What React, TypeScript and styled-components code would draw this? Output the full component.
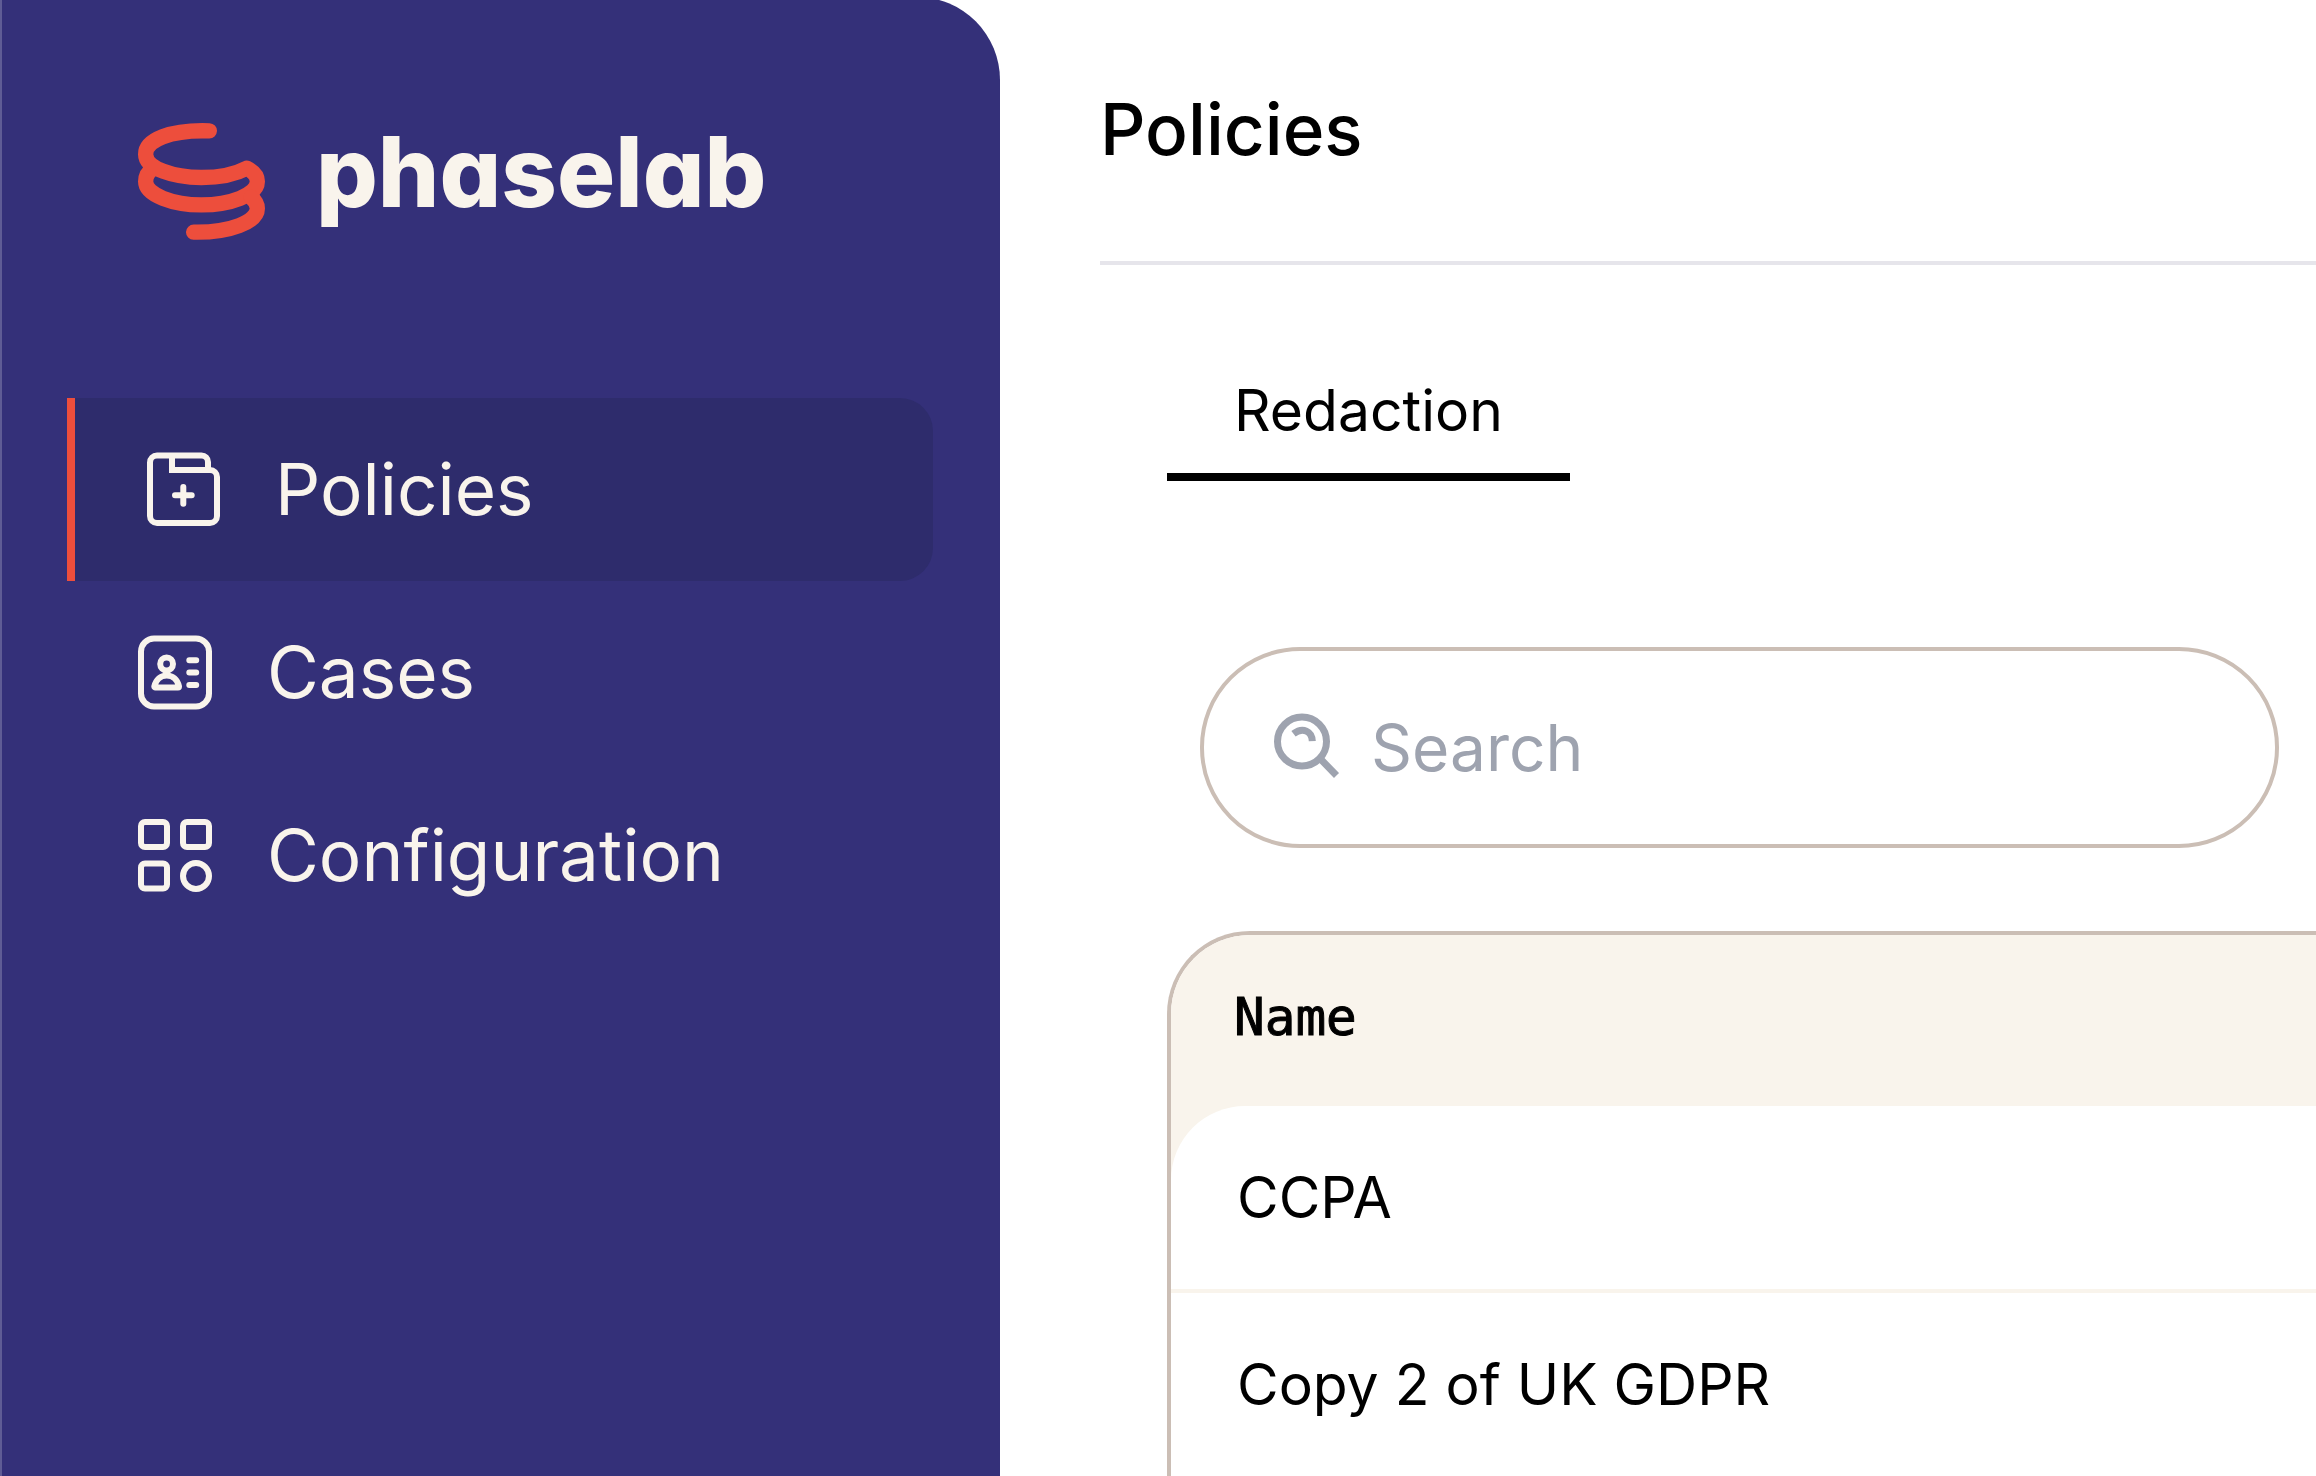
import React from "react";
import styled, { createGlobalStyle } from "styled-components";

const color = {
  indigo: "#343079",
  indigoDark: "#2e2c6c",
  edge: "#5f5c95",
  cream: "#f9f4ec",
  red: "#ed4e3c",
  sand: "#cbbeb5",
  grey: "#9ea3af",
  line: "#e6e5eb",
};

const GlobalStyle = createGlobalStyle`
  *, *::before, *::after { box-sizing: border-box; }
  body {
    margin: 0;
    background: #fff;
    color: #000;
    font-family: Inter, "Liberation Sans", sans-serif;
  }
`;

const Page = styled.div`
  display: flex;
  height: 100vh;
  overflow: hidden;
`;

const Sidebar = styled.aside`
  flex: 0 0 1000px;
  margin-top: -3px;
  padding: 126px 67px 0 65px;
  border-left: 2px solid ${color.edge};
  border-top-right-radius: 83px;
  background: ${color.indigo};
  color: ${color.cream};
`;

const Brand = styled.a`
  display: flex;
  align-items: flex-start;
  gap: 51px;
  padding-left: 71px;
  color: inherit;
  text-decoration: none;
`;

const Wordmark = styled.span`
  font-size: 97px;
  line-height: 98px;
  font-weight: 800;
  font-feature-settings: "cv11";
`;

const NavList = styled.nav`
  display: flex;
  flex-direction: column;
  margin-top: 158px;
`;

const NavLink = styled.a<{ $active?: boolean }>`
  display: flex;
  align-items: center;
  gap: 42px;
  height: 183px;
  padding: 0 0 2px 58px;
  border-left: ${(p) => (p.$active ? `8px solid ${color.red}` : "0")};
  border-radius: 0 33px 33px 0;
  background: ${(p) => (p.$active ? color.indigoDark : "transparent")};
  color: inherit;
  font-size: 71px;
  line-height: 100px;
  text-decoration: none;
`;

const Main = styled.main`
  flex: 1;
  min-width: 0;
  padding-left: 100px;
`;

const Header = styled.header`
  padding: 89px 0 92px;
  border-bottom: 4px solid ${color.line};
`;

const Title = styled.h1`
  margin: 0;
  font-size: 71px;
  line-height: 80px;
  font-weight: 500;
`;

const Content = styled.section`
  padding: 111px 0 0 67px;
`;

const Tab = styled.button`
  display: block;
  padding: 0 67px 27px;
  border: 0;
  border-bottom: 8px solid #000;
  background: none;
  color: inherit;
  font: inherit;
  font-size: 57px;
  line-height: 70px;
`;

const SearchBox = styled.label`
  display: flex;
  align-items: center;
  gap: 30px;
  max-width: 1079px;
  height: 201px;
  margin: 166px 37px 83px 33px;
  padding: 0 67px;
  border: 4px solid ${color.sand};
  border-radius: 100px;
  color: ${color.grey};
`;

const SearchInput = styled.input`
  flex: 1;
  min-width: 0;
  padding: 0;
  border: 0;
  outline: 0;
  background: none;
  color: #000;
  font: inherit;
  font-size: 64px;
  line-height: 100px;
  &::placeholder {
    color: ${color.grey};
    opacity: 1;
  }
`;

const TableFrame = styled.div`
  border: 4px solid ${color.sand};
  border-width: 4px 0 0 4px;
  border-top-left-radius: 83px;
  overflow: hidden;
`;

const Table = styled.table`
  width: 100%;
  border-spacing: 0;
  background: ${color.cream};
  text-align: left;
`;

const HeadCell = styled.th`
  height: 171px;
  padding: 0 63px 6px;
  font-family: "DejaVu Sans Mono", monospace;
  font-size: 51px;
  line-height: 66px;
  font-weight: 400;
  -webkit-text-stroke: 1px currentColor;
`;

const Cell = styled.td<{ $first?: boolean }>`
  height: 187px;
  padding: 0 66px;
  border-bottom: 4px solid ${color.cream};
  border-top-left-radius: ${(p) => (p.$first ? "74px" : "0")};
  background: #fff;
  font-size: 57px;
  line-height: 70px;
`;

const LogoMark = () => (
  <svg width="127" height="117" viewBox="54 69 381 350" fill="none" stroke={color.red} strokeWidth="46" strokeLinecap="round" strokeLinejoin="round" aria-hidden="true">
    <path d="M268 92C150 88 77 120 77 162C77 205 160 232 244 232C300 232 350 220 380 204C400 214 412 228 412 244C412 285 330 314 244 314C160 314 77 285 77 244C77 228 84 215 98 206" />
    <path d="M394 292C406 302 412 313 412 325C412 365 330 398 221 396" />
  </svg>
);

const NavIcon = ({ children }: { children: React.ReactNode }) => (
  <svg width="100" height="100" viewBox="0 0 100 100" fill="none" stroke="currentColor" strokeWidth="6" strokeLinecap="round" aria-hidden="true">
    {children}
  </svg>
);

const PoliciesIcon = () => (
  <NavIcon>
    <path d="M75 31V23A6.500 6.500 0 0 0 68.500 16.500H24A7 7 0 0 0 17 23.500V77A7 7 0 0 0 24 84H77A7 7 0 0 0 84 77V38A7 7 0 0 0 77 31H39V17" strokeLinecap="butt" />
    <path d="M42 56.300H58.700M50.300 48V64.800" />
  </NavIcon>
);

const CasesIcon = () => (
  <NavIcon>
    <rect x="16" y="16.500" width="68" height="68" rx="13" />
    <circle cx="41.600" cy="42" r="6.400" />
    <path d="M30.500 65.500H53A1 1 0 0 0 54 64.500C52.500 57.500 47.500 53.500 41.700 53.500S31 57.500 29.300 64.500A1 1 0 0 0 30.500 65.500Z" strokeLinejoin="round" />
    <path d="M64.300 38.200H71.200M64.300 50.600H71.200M64.300 63H71.200" />
  </NavIcon>
);

const ConfigurationIcon = () => (
  <NavIcon>
    <rect x="16" y="17" width="26" height="25" rx="4" />
    <rect x="58" y="17" width="26" height="25" rx="4" />
    <rect x="16" y="58.500" width="26" height="25" rx="4" />
    <circle cx="71" cy="71" r="13" />
  </NavIcon>
);

const SearchIcon = () => (
  <svg width="70" height="70" viewBox="0 4 70 70" fill="none" stroke="currentColor" strokeWidth="7" aria-hidden="true">
    <circle cx="31" cy="32.500" r="24.500" />
    <path d="M22.500 24.800C32 17.500 41 22.500 41.300 32.200M49.500 50L65.500 66.500" />
  </svg>
);

const navItems = [
  { label: "Policies", Icon: PoliciesIcon, active: true },
  { label: "Cases", Icon: CasesIcon, active: false },
  { label: "Configuration", Icon: ConfigurationIcon, active: false },
];

const policies = ["CCPA", "Copy 2 of UK GDPR"];

export default function App() {
  return (
    <>
      <GlobalStyle />
      <Page>
        <Sidebar>
          <Brand href="#">
            <LogoMark />
            <Wordmark>phaselab</Wordmark>
          </Brand>
          <NavList>
            {navItems.map(({ label, Icon, active }) => (
              <NavLink key={label} href="#" $active={active} aria-current={active ? "page" : undefined}>
                <Icon />
                {label}
              </NavLink>
            ))}
          </NavList>
        </Sidebar>
        <Main>
          <Header>
            <Title>Policies</Title>
          </Header>
          <Content>
            <Tab type="button">Redaction</Tab>
            <SearchBox>
              <SearchIcon />
              <SearchInput type="text" placeholder="Search" aria-label="Search" />
            </SearchBox>
            <TableFrame>
              <Table>
                <thead>
                  <tr>
                    <HeadCell scope="col">Name</HeadCell>
                  </tr>
                </thead>
                <tbody>
                  {policies.map((name, i) => (
                    <tr key={name}>
                      <Cell $first={i === 0}>{name}</Cell>
                    </tr>
                  ))}
                </tbody>
              </Table>
            </TableFrame>
          </Content>
        </Main>
      </Page>
    </>
  );
}
